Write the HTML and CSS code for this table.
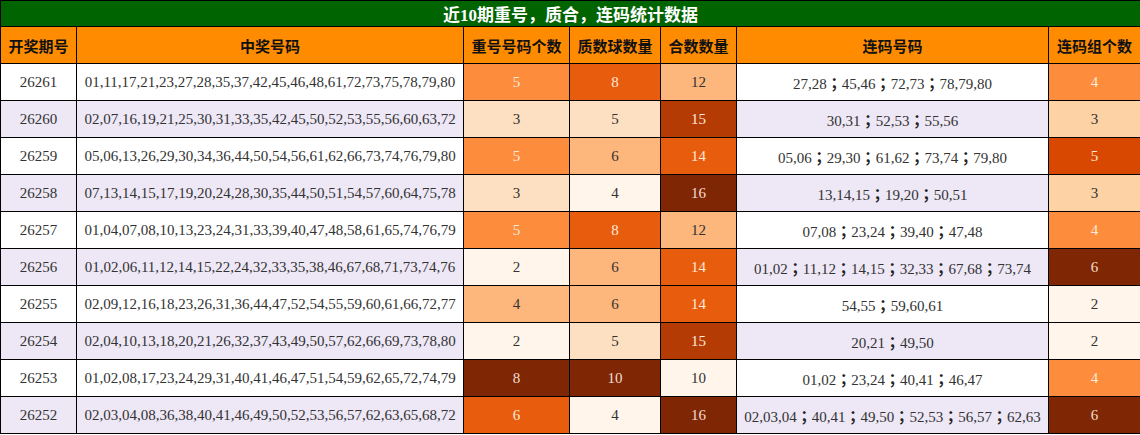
FILE: index.html
```html
<!DOCTYPE html>
<html lang="zh">
<head>
<meta charset="utf-8">
<title>近10期重号，质合，连码统计数据</title>
<link rel="stylesheet" href="styles.css">
</head>
<body>
<table class="stats">
  <colgroup>
    <col class="c-period">
    <col class="c-nums">
    <col class="c-rep">
    <col class="c-prime">
    <col class="c-comp">
    <col class="c-consec">
    <col class="c-groups">
  </colgroup>
  <thead>
    <tr class="title-row"><th colspan="7">近10期重号，质合，连码统计数据</th></tr>
    <tr class="head-row">
      <th>开奖期号</th><th>中奖号码</th><th>重号号码个数</th><th>质数球数量</th><th>合数数量</th><th>连码号码</th><th>连码组个数</th>
    </tr>
  </thead>
  <tbody>
    <tr>
      <td>26261</td><td>01,11,17,21,23,27,28,35,37,42,45,46,48,61,72,73,75,78,79,80</td>
      <td class="h5">5</td><td class="h6">8</td><td class="h4">12</td>
      <td>27,28<span class="sep">；</span>45,46<span class="sep">；</span>72,73<span class="sep">；</span>78,79,80</td><td class="h5">4</td>
    </tr>
    <tr class="alt">
      <td>26260</td><td>02,07,16,19,21,25,30,31,33,35,42,45,50,52,53,55,56,60,63,72</td>
      <td class="h2">3</td><td class="h2">5</td><td class="h8">15</td>
      <td>30,31<span class="sep">；</span>52,53<span class="sep">；</span>55,56</td><td class="h3">3</td>
    </tr>
    <tr>
      <td>26259</td><td>05,06,13,26,29,30,34,36,44,50,54,56,61,62,66,73,74,76,79,80</td>
      <td class="h5">5</td><td class="h4">6</td><td class="h6">14</td>
      <td>05,06<span class="sep">；</span>29,30<span class="sep">；</span>61,62<span class="sep">；</span>73,74<span class="sep">；</span>79,80</td><td class="h7">5</td>
    </tr>
    <tr class="alt">
      <td>26258</td><td>07,13,14,15,17,19,20,24,28,30,35,44,50,51,54,57,60,64,75,78</td>
      <td class="h2">3</td><td class="h1">4</td><td class="h9">16</td>
      <td>13,14,15<span class="sep">；</span>19,20<span class="sep">；</span>50,51</td><td class="h3">3</td>
    </tr>
    <tr>
      <td>26257</td><td>01,04,07,08,10,13,23,24,31,33,39,40,47,48,58,61,65,74,76,79</td>
      <td class="h5">5</td><td class="h6">8</td><td class="h4">12</td>
      <td>07,08<span class="sep">；</span>23,24<span class="sep">；</span>39,40<span class="sep">；</span>47,48</td><td class="h5">4</td>
    </tr>
    <tr class="alt">
      <td>26256</td><td>01,02,06,11,12,14,15,22,24,32,33,35,38,46,67,68,71,73,74,76</td>
      <td class="h1">2</td><td class="h4">6</td><td class="h6">14</td>
      <td>01,02<span class="sep">；</span>11,12<span class="sep">；</span>14,15<span class="sep">；</span>32,33<span class="sep">；</span>67,68<span class="sep">；</span>73,74</td><td class="h9">6</td>
    </tr>
    <tr>
      <td>26255</td><td>02,09,12,16,18,23,26,31,36,44,47,52,54,55,59,60,61,66,72,77</td>
      <td class="h4">4</td><td class="h4">6</td><td class="h6">14</td>
      <td>54,55<span class="sep">；</span>59,60,61</td><td class="h1">2</td>
    </tr>
    <tr class="alt">
      <td>26254</td><td>02,04,10,13,18,20,21,26,32,37,43,49,50,57,62,66,69,73,78,80</td>
      <td class="h1">2</td><td class="h2">5</td><td class="h8">15</td>
      <td>20,21<span class="sep">；</span>49,50</td><td class="h1">2</td>
    </tr>
    <tr>
      <td>26253</td><td>01,02,08,17,23,24,29,31,40,41,46,47,51,54,59,62,65,72,74,79</td>
      <td class="h9">8</td><td class="h9">10</td><td class="h1">10</td>
      <td>01,02<span class="sep">；</span>23,24<span class="sep">；</span>40,41<span class="sep">；</span>46,47</td><td class="h5">4</td>
    </tr>
    <tr class="alt">
      <td>26252</td><td>02,03,04,08,36,38,40,41,46,49,50,52,53,56,57,62,63,65,68,72</td>
      <td class="h6">6</td><td class="h1">4</td><td class="h9">16</td>
      <td>02,03,04<span class="sep">；</span>40,41<span class="sep">；</span>49,50<span class="sep">；</span>52,53<span class="sep">；</span>56,57<span class="sep">；</span>62,63</td><td class="h9">6</td>
    </tr>
  </tbody>
</table>
</body>
</html>
```

FILE: styles.css
```css
html, body {
  margin: 0;
  padding: 0;
  background: #ffffff;
}

.stats {
  width: 1140px;
  border-collapse: collapse;
  table-layout: fixed;
  font-family: "Liberation Serif", "Noto Sans CJK SC", serif;
  font-size: 15px;
  color: #333333;
}

.c-period { width: 76px; }
.c-nums { width: 387px; }
.c-rep { width: 106px; }
.c-prime { width: 91px; }
.c-comp { width: 76px; }
.c-consec { width: 312px; }
.c-groups { width: 92px; }

.stats th,
.stats td {
  border: 1px solid #000000;
  text-align: center;
  padding: 0;
  white-space: nowrap;
  overflow: hidden;
}

.title-row th {
  height: 25px;
  background: #006400;
  color: #ffffff;
  font-family: "Liberation Serif", "Noto Sans CJK SC", serif;
  font-weight: bold;
  font-size: 17px;
}

.head-row th {
  height: 36px;
  background: #ff8c00;
  color: #111111;
  font-family: "Noto Sans CJK SC", sans-serif;
  font-weight: bold;
  font-size: 15px;
}

.stats tbody td {
  height: 36px;
  background: #ffffff;
}

.stats tbody tr.alt td {
  background: #ede7f6;
}

.sep {
  font-family: "Noto Sans CJK TC", sans-serif;
  font-weight: bold;
  color: #222222;
}

.stats tbody tr td.h1 { background: #fff5eb; color: #333333; }
.stats tbody tr td.h2 { background: #fddfc1; color: #333333; }
.stats tbody tr td.h3 { background: #fdd2a4; color: #333333; }
.stats tbody tr td.h4 { background: #fdb67c; color: #333333; }
.stats tbody tr td.h5 { background: #fd8d3c; color: #fbe9dc; }
.stats tbody tr td.h6 { background: #e85c0e; color: #fbe9dc; }
.stats tbody tr td.h7 { background: #d94801; color: #fbe9dc; }
.stats tbody tr td.h8 { background: #b43b03; color: #fbe9dc; }
.stats tbody tr td.h9 { background: #7f2704; color: #f2ddd0; }
```
